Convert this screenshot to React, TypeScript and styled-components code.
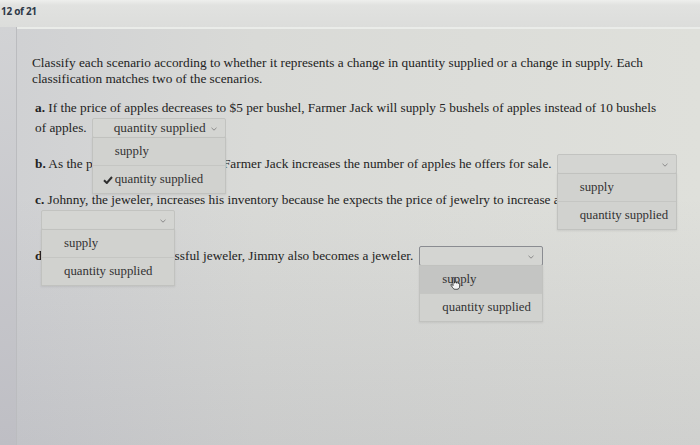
import React from "react";
import styled, { createGlobalStyle } from "styled-components";

const GlobalStyle = createGlobalStyle`
  html, body { margin: 0; padding: 0; }
  body { width: 700px; height: 445px; overflow: hidden; background: #d8d9d7; }
`;

const Page = styled.div`
  width: 700px;
  height: 445px;
  display: flex;
  flex-direction: column;
  overflow: hidden;
  font-family: "Liberation Serif", "Times New Roman", serif;
  color: #232323;
`;

const TopBar = styled.div`
  height: 27px;
  flex: none;
  padding: 1px 0 0 1px;
  box-sizing: border-box;
  background: linear-gradient(to bottom, #eeefed 0, #e1e2e0 5px, #dcdddb 100%);
`;

const Counter = styled.span`
  display: inline-block;
  font-family: "Open Sans", "Liberation Sans", sans-serif;
  font-weight: 700;
  font-size: 10px;
  line-height: 12px;
  letter-spacing: -0.3px;
  color: #2e3848;
`;

const Body = styled.div`
  flex: 1;
  display: flex;
`;

const Edge = styled.div`
  width: 16px;
  flex: none;
  background: linear-gradient(to bottom, #d2d3d5, #bebec4);
  border-right: 1px solid #bbbcbf;
`;

const Panel = styled.div`
  flex: 1;
  border-top: 2px solid #eaece9;
  padding: 26px 0 0 15px;
  background:
    linear-gradient(to bottom, rgba(0, 0, 0, 0) 40%, rgba(70, 70, 95, 0.1) 100%),
    linear-gradient(to right, #d0d1d3 0%, #d9dad7 35%, #dfe0db 100%);
`;

const Intro = styled.p`
  margin: 0;
  font-size: 13.3px;
  line-height: 16px;
  white-space: nowrap;
`;

const Questions = styled.div`
  margin: 11px 0 0 3px;
  display: flex;
  flex-direction: column;
  gap: 16px;
`;

const Question = styled.div`
  font-size: 13.3px;
  line-height: 20px;
  white-space: nowrap;
`;

const Label = styled.b`
  font-weight: 700;
`;

const SelectBox = styled.span<{ $w: number; $focus?: boolean; $ml?: number }>`
  position: relative;
  display: inline-block;
  vertical-align: middle;
  box-sizing: border-box;
  width: ${(p) => p.$w}px;
  height: 20px;
  margin: -2px 0 0 ${(p) => p.$ml ?? 4}px;
  background: #d4d5d2;
  border: 1px solid ${(p) => (p.$focus ? "#8a8c91" : "#c2c3c0")};
  border-radius: 2px;
  line-height: 18px;
`;

const Value = styled.span`
  display: block;
  padding-left: 21px;
  color: #333;
`;

const Caret = styled.svg`
  position: absolute;
  right: 8px;
  top: 8px;
`;

const Menu = styled.div`
  position: absolute;
  z-index: 5;
  top: 18px;
  left: -1px;
  right: -1px;
  background: #d1d2cf;
  border: 1px solid #c1c2bf;
  box-shadow: 0 1px 2px rgba(0, 0, 0, 0.08);
  font-size: 12.8px;
`;

const Option = styled.div<{ $hover?: boolean }>`
  position: relative;
  height: 27px;
  line-height: 27px;
  padding-left: 22px;
  color: #333;
  background: ${(p) => (p.$hover ? "#c4c5c3" : "transparent")};
  & + & {
    border-top: 1px solid #c5c6c3;
  }
`;

const Check = styled.svg`
  position: absolute;
  left: 10px;
  top: 10px;
`;

const Cursor = styled.svg`
  position: absolute;
  left: 30px;
  top: 11px;
`;

type SelectProps = {
  width: number;
  value?: string;
  selected?: string;
  hover?: string;
  focus?: boolean;
  ml?: number;
  cursor?: boolean;
};

const OPTIONS = ["supply", "quantity supplied"];

function Select({ width, value, selected, hover, focus, ml, cursor }: SelectProps) {
  return (
    <SelectBox $w={width} $focus={focus} $ml={ml}>
      <Value>{value ?? "\u00a0"}</Value>
      <Caret width="6" height="4" viewBox="0 0 6 4">
        <path d="M0.5 0.8 L3 3.2 L5.5 0.8" fill="none" stroke="#8a8a8a" strokeWidth="1" />
      </Caret>
      <Menu>
        {OPTIONS.map((o) => (
          <Option key={o} $hover={hover === o}>
            {selected === o && (
              <Check width="10" height="8" viewBox="0 0 10 8">
                <path d="M1 4.2 L3.8 7 L9 1" fill="none" stroke="#2e2e2e" strokeWidth="2" />
              </Check>
            )}
            {o}
            {cursor && hover === o && (
              <Cursor width="11" height="13" viewBox="0 0 11 13">
                <path
                  d="M3 1.2 C3 0.4 4.4 0.4 4.4 1.2 L4.4 6 L5 6 L5 4.8 C5 4.1 6.3 4.1 6.3 4.8 L6.3 6.1 L6.8 6.1 L6.8 5.3 C6.8 4.7 8 4.7 8 5.3 L8 6.4 L8.5 6.4 C8.5 5.8 9.7 5.8 9.7 6.4 L9.7 9 C9.7 11 8.6 12.3 6.8 12.3 L5.3 12.3 C4 12.3 3.3 11.6 2.6 10.6 L1 8.2 C0.6 7.5 1.5 6.9 2 7.5 L3 8.6 Z"
                  fill="#f4f4f4"
                  stroke="#222"
                  strokeWidth="0.8"
                  strokeLinejoin="round"
                />
              </Cursor>
            )}
          </Option>
        ))}
      </Menu>
    </SelectBox>
  );
}

export default function App() {
  return (
    <>
      <GlobalStyle />
      <Page>
        <TopBar>
          <Counter>12 of 21</Counter>
        </TopBar>
        <Body>
          <Edge />
          <Panel>
            <Intro>
              Classify each scenario according to whether it represents a change in quantity supplied or a change in supply. Each
              <br />
              classification matches two of the scenarios.
            </Intro>
            <Questions>
              <Question>
                <Label>a.</Label> If the price of apples decreases to $5 per bushel, Farmer Jack will supply 5 bushels of apples instead of 10 bushels
                <br />
                of apples.
                <Select width={134} value="quantity supplied" selected="quantity supplied" ml={5} />
              </Question>
              <Question>
                <Label>b.</Label> As the price of apples increases, Farmer Jack increases the number of apples he offers for sale.
                <Select width={120} ml={5} />
              </Question>
              <Question>
                <Label>c.</Label> Johnny, the jeweler, increases his inventory because he expects the price of jewelry to increase as demand rises.
                <br />
                <Select width={134} ml={6} />
              </Question>
              <Question>
                <Label>d.</Label> Since Johnny is a successful jeweler, Jimmy also becomes a jeweler.
                <Select width={124} focus hover="supply" cursor ml={6} />
              </Question>
            </Questions>
          </Panel>
        </Body>
      </Page>
    </>
  );
}
